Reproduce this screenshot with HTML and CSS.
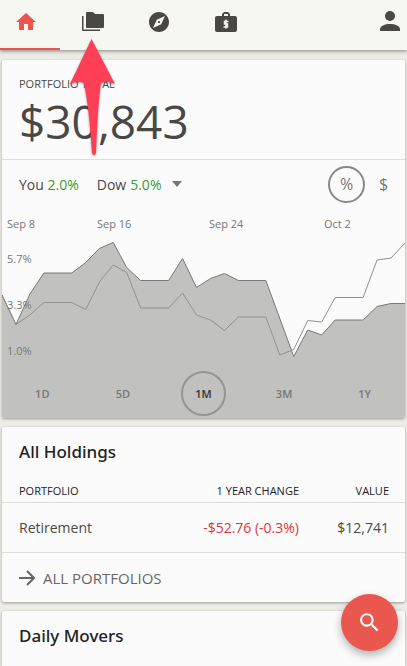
FILE: index.html
```html
<!DOCTYPE html>
<html lang="en">
<head>
<meta charset="utf-8">
<meta name="viewport" content="width=device-width, initial-scale=1">
<title>Portfolio</title>
<link rel="stylesheet" href="styles.css">
</head>
<body>

<header class="topbar">
	<nav class="tabs">
		<a class="tab active" href="#home" aria-label="Home">
			<svg viewBox="0 0 24 24"><path d="M10 20v-6h4v6h5v-8h3L12 3 2 12h3v8z"/></svg>
		</a>
		<a class="tab" href="#portfolios" aria-label="Portfolios">
			<svg viewBox="0 0 24 24"><path d="M1 6h1.500v13.500H19V21H2a1 1 0 0 1-1-1z"/><path d="M6 2h6l2 2h8a1 1 0 0 1 1 1v12a1 1 0 0 1-1 1H6a1 1 0 0 1-1-1V3a1 1 0 0 1 1-1z"/></svg>
		</a>
		<a class="tab" href="#explore" aria-label="Explore">
			<svg viewBox="0 0 24 24"><path d="M12 10.900c-.61 0-1.100.49-1.100 1.100s.49 1.100 1.100 1.100c.61 0 1.100-.49 1.100-1.100s-.49-1.100-1.100-1.100zM12 2C6.480 2 2 6.480 2 12s4.480 10 10 10 10-4.480 10-10S17.520 2 12 2zm2.190 12.190L6 18l3.810-8.190L18 6l-3.810 8.190z"/></svg>
		</a>
		<a class="tab" href="#accounts" aria-label="Accounts">
			<svg viewBox="0 0 24 24"><path fill-rule="evenodd" d="M8 6V4l2-2h4l2 2v2h5a2 2 0 0 1 2 2v12a2 2 0 0 1-2 2H3a2 2 0 0 1-2-2V8a2 2 0 0 1 2-2zm2 0h4V4h-4z"/><path class="coin" d="M14.500 11.500H10.500V14H13.500V17H9.500M12 9.500V18.500"/></svg>
		</a>
	</nav>
	<a class="profile" href="#profile" aria-label="Profile">
		<svg viewBox="0 0 24 24"><circle cx="12" cy="7" r="5"/><path d="M2 22v-2c0-3 5-5 10-5s10 2 10 5v2z"/></svg>
	</a>
</header>

<main>

<section class="card">
	<div class="total">
		<h1>PORTFOLIO TOTAL</h1>
		<p class="amount">$30,843</p>
	</div>

	<div class="compare">
		<span>You <span class="up">2.0%</span></span>
		<button class="index">Dow <span class="up">5.0%</span> <svg class="caret" viewBox="0 0 10 6"><path d="M0 0h10L5 6z"/></svg></button>
		<div class="units">
			<button class="unit selected">%</button>
			<button class="unit">$</button>
		</div>
	</div>

	<div class="chart">
		<svg class="plot" viewBox="2 208 404 210" preserveAspectRatio="none">
			<path class="area" d="M2 295L16 324.500 30 294 44 273H72L86 262.500 99.500 248.500 113.500 242.500 127 267.500 141 280.500H169L183 258.500 197 287.500 211 278.500 225 273.500 239 280.500H266.500L294.500 356.500 308.500 330 322.500 335 336 320H364L378 306.500 392 303.500H406V418H2z"/>
			<path class="line you" d="M2 295L16 324.500 30 294 44 273H72L86 262.500 99.500 248.500 113.500 242.500 127 267.500 141 280.500H169L183 258.500 197 287.500 211 278.500 225 273.500 239 280.500H266.500L294.500 356.500 308.500 330 322.500 335 336 320H364L378 306.500 392 303.500H406"/>
			<path class="line dow" d="M2 295L16 324.500 30 315 44 302.500H72L86 309.500 100 281.500 113.500 265 127 272.500 141 308H169L183 293 197 315 211 320 225 330.500 239 317H266.500L280.500 355 294.500 349.500 308.500 320.500 322.500 322 336 297.500H364L378 260 392 258 406 243"/>
		</svg>
		<div class="dates">
			<span>Sep 8</span>
			<span>Sep 16</span>
			<span>Sep 24</span>
			<span>Oct 2</span>
		</div>
		<div class="scale">
			<span>5.7%</span>
			<span>3.3%</span>
			<span>1.0%</span>
		</div>
		<div class="ranges">
			<button class="range">1D</button>
			<button class="range">5D</button>
			<button class="range selected">1M</button>
			<button class="range">3M</button>
			<button class="range">1Y</button>
		</div>
	</div>
</section>

<section class="card">
	<h2>All Holdings</h2>
	<table class="holdings">
		<thead>
			<tr><th>PORTFOLIO</th><th>1 YEAR CHANGE</th><th>VALUE</th></tr>
		</thead>
		<tbody>
			<tr><td>Retirement</td><td class="down">-$52.76 (-0.3%)</td><td>$12,741</td></tr>
		</tbody>
	</table>
	<a class="more" href="#portfolios">
		<svg viewBox="0 0 16 16"><path d="M0 8h15M8 1l7 7-7 7"/></svg>
		ALL PORTFOLIOS
	</a>
</section>

<section class="card last">
	<h2>Daily Movers</h2>
</section>

</main>

<button class="search" aria-label="Search">
	<svg viewBox="0 0 24 24"><path d="M15.500 14h-.79l-.28-.27C15.410 12.590 16 11.110 16 9.500 16 5.910 13.090 3 9.500 3S3 5.910 3 9.500 5.910 16 9.500 16c1.610 0 3.090-.59 4.230-1.570l.27.28v.79l5 4.990L20.490 19l-4.990-5zm-6 0C7.010 14 5 11.990 5 9.500S7.010 5 9.500 5 14 7.010 14 9.500 11.990 14 9.500 14z"/></svg>
</button>

<svg class="pointer" viewBox="0 0 46 118"><path d="M21.500 0L45 45Q37 41 31 44 28 62 26 114 24 118 22 114 19 68 14 44 8 41 0 45z"/></svg>

</body>
</html>
```
FILE: styles.css
```css
body, button {
	font-family: 'Open Sans', 'Noto Sans', sans-serif;
}

body {
	display: flex;
	flex-direction: column;
	min-height: 100vh;
	margin: 0;
	color: #4a4845;
	background-color: #edece6;
}

h1, h2, p {
	margin: 0;
	font-weight: normal;
}

button {
	padding: 0;
	border: none;
	color: inherit;
	background: none;
}

a {
	color: inherit;
	text-decoration: none;
}

svg {
	display: block;
	fill: currentColor;
}

/* top bar */

.topbar {
	display: flex;
	justify-content: space-between;
	height: 50px;
	background-color: #f7f7f2;
	box-shadow: 0 1px 4px rgba(0, 0, 0, 0.45);
}

.tabs {
	display: flex;
	width: 266px;
	margin-left: -7px;
}

.tab {
	display: flex;
	flex: 1;
	align-items: center;
	justify-content: center;
	box-sizing: border-box;
	padding-bottom: 4px;
	border-bottom: 2px solid transparent;
}

.tab.active {
	border-color: #e8564f;
	color: #e8564f;
}

.tab svg, .profile svg {
	width: 24px;
	height: 24px;
}

.coin {
	fill: none;
	stroke: #f7f7f2;
	stroke-width: 1.5;
}

.profile {
	padding: 9px 5px 0 0;
}

/* cards */

main {
	display: flex;
	flex: 1;
	flex-direction: column;
	gap: 9px;
	padding: 10px 2px 0;
}

.card {
	overflow: hidden;
	border-radius: 2px;
	background-color: #fbfbfb;
	box-shadow: 0 1px 3px rgba(0, 0, 0, 0.35);
}

.card.last {
	flex: 1;
	border-radius: 2px 2px 0 0;
}

.total {
	padding: 16px 17px 9px;
	border-bottom: 1px solid #dedddb;
}

.total h1 {
	font-size: 11px;
	line-height: 16px;
}

.amount {
	font-size: 46px;
	line-height: 58px;
}

.compare {
	display: flex;
	align-items: center;
	gap: 18px;
	height: 48px;
	padding: 0 3px 0 17px;
	font-size: 14px;
}

.index {
	display: flex;
	align-items: center;
	gap: 4px;
	font-size: 14px;
}

.caret {
	width: 10px;
	height: 6px;
	margin-left: 7px;
	color: #777;
}

.up {
	color: #3a9a35;
}

.units {
	display: flex;
	margin-left: auto;
}

.unit {
	box-sizing: border-box;
	width: 37px;
	height: 37px;
	border: 2px solid transparent;
	border-radius: 50%;
	color: #777;
	font-size: 16px;
}

.unit.selected {
	border-color: #888;
}

/* chart */

.chart {
	display: grid;
	grid-template-rows: 30px 1fr 50px;
	height: 210px;
	color: #777;
	font-size: 11px;
}

.plot {
	grid-area: 1 / 1 / 4 / 2;
	width: 100%;
	height: 210px;
}

.area {
	fill: #c1c1bf;
}

.line {
	fill: none;
	stroke: #777;
}

.line.dow {
	stroke: #929090;
}

.dates {
	display: grid;
	grid-area: 1 / 1;
	grid-template-columns: 90px 112px 115px 1fr;
	align-items: center;
	padding: 0 5px;
}

.scale {
	display: flex;
	grid-area: 2 / 1;
	flex-direction: column;
	gap: 30px;
	padding: 13px 5px 0;
	line-height: 16px;
}

.ranges {
	display: flex;
	grid-area: 3 / 1;
	align-items: center;
	justify-content: space-around;
}

.range {
	box-sizing: border-box;
	width: 45px;
	height: 45px;
	border: 2px solid transparent;
	border-radius: 50%;
	font-size: 11px;
	font-weight: 600;
}

.range.selected {
	border-color: #949492;
	color: #333;
}

/* holdings */

h2 {
	padding: 13px 17px 14px;
	color: #222;
	font-family: 'Noto Sans', sans-serif;
	font-size: 17px;
	font-weight: 500;
	line-height: 24px;
}

.holdings {
	width: 100%;
	border-collapse: collapse;
}

.holdings th, .holdings td {
	padding: 0 0 0 17px;
	border-bottom: 1px solid #dedddb;
	text-align: right;
}

.holdings th {
	height: 24px;
	color: #222;
	font-size: 11px;
	font-weight: normal;
}

.holdings td {
	height: 49px;
	font-size: 14px;
}

.holdings th:first-child, .holdings td:first-child {
	text-align: left;
}

.holdings th:last-child, .holdings td:last-child {
	width: 73px;
	padding-right: 16px;
}

.holdings .down {
	color: #d9383e;
}

.more {
	display: flex;
	align-items: center;
	gap: 8px;
	height: 49px;
	padding: 0 17px;
	color: #666;
	font-size: 15px;
}

.more svg {
	width: 16px;
	height: 16px;
	fill: none;
	stroke: currentColor;
	stroke-width: 2;
}

/* overlays */

.search {
	position: fixed;
	right: 9px;
	bottom: 15px;
	display: flex;
	align-items: center;
	justify-content: center;
	width: 57px;
	height: 57px;
	border-radius: 50%;
	color: white;
	background-color: #ea574f;
	box-shadow: 0 4px 8px rgba(0, 0, 0, 0.3);
}

.search svg {
	width: 25px;
	height: 25px;
}

.pointer {
	position: absolute;
	top: 39px;
	left: 70px;
	width: 46px;
	height: 118px;
	color: #ff3f55;
	filter: drop-shadow(0 1px 1px rgba(0, 0, 0, 0.4));
}
```
